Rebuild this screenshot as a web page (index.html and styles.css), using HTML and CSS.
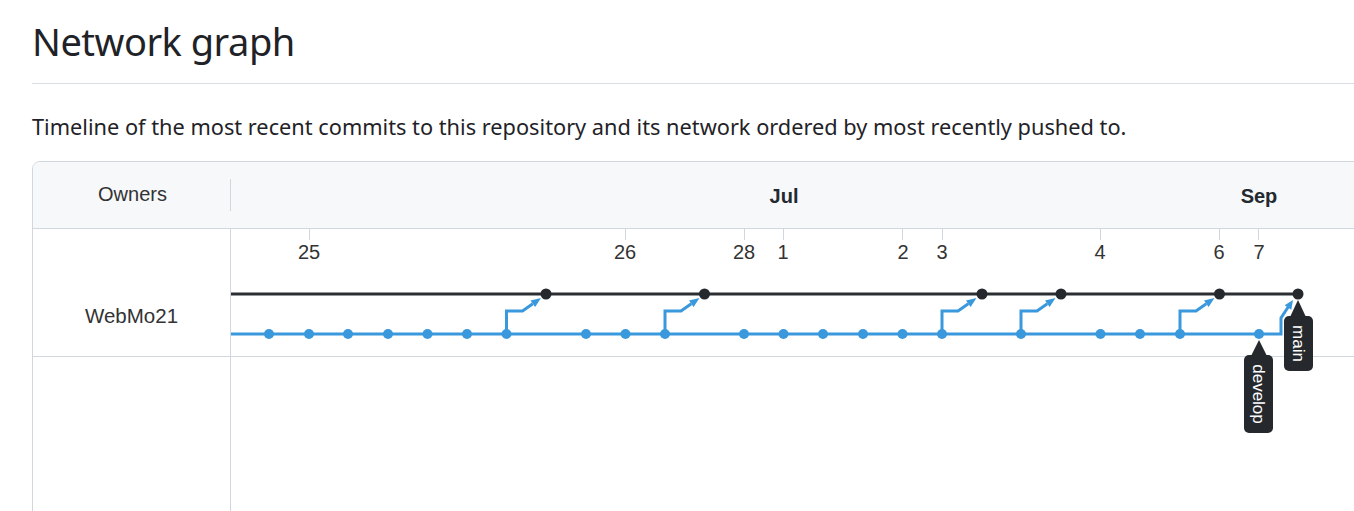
FILE: index.html
```html
<!DOCTYPE html>
<html lang="en">
<head>
<meta charset="utf-8">
<title>Network graph</title>
<link rel="stylesheet" href="styles.css">
</head>
<body>
<div class="page">
  <div class="subhead"><h2 class="subhead-title">Network graph</h2></div>
  <p class="desc">Timeline of the most recent commits to this repository and its network ordered by most recently pushed to.</p>
  <div class="network">
    <div class="net-head">
      <div class="owners-h"><span>Owners</span></div>
      <svg class="months" width="1140" height="66" viewBox="231 162 1140 66">
        <text x="784" y="203" class="month">Jul</text>
        <text x="1259" y="203" class="month">Sep</text>
      </svg>
    </div>
    <div class="net-body">
      <div class="owners-col">
        <div class="owner-spacer"></div>
        <div class="owner">WebMo21</div>
      </div>
      <svg class="graph" width="1140" height="290" viewBox="231 229 1140 290">
        <g class="ticks">
          <line x1="309.5" y1="229" x2="309.5" y2="240"/>
          <line x1="625.5" y1="229" x2="625.5" y2="240"/>
          <line x1="744.5" y1="229" x2="744.5" y2="240"/>
          <line x1="783.5" y1="229" x2="783.5" y2="240"/>
          <line x1="902.5" y1="229" x2="902.5" y2="240"/>
          <line x1="942.5" y1="229" x2="942.5" y2="240"/>
          <line x1="1100.5" y1="229" x2="1100.5" y2="240"/>
          <line x1="1219.5" y1="229" x2="1219.5" y2="240"/>
          <line x1="1258.5" y1="229" x2="1258.5" y2="240"/>
        </g>
        <g class="days">
          <text x="309" y="259">25</text>
          <text x="625" y="259">26</text>
          <text x="744" y="259">28</text>
          <text x="783" y="259">1</text>
          <text x="903" y="259">2</text>
          <text x="942" y="259">3</text>
          <text x="1100" y="259">4</text>
          <text x="1219" y="259">6</text>
          <text x="1259" y="259">7</text>
        </g>
        <line class="rowline" x1="231" y1="356.5" x2="1371" y2="356.5"/>

        <line class="main-line" x1="231" y1="294" x2="1298" y2="294"/>
        <path class="dev-line" d="M231 334 H1281 V318 L1288.5 306.5"/>
        <polygon class="dev-fill" points="1293,300 1291.3,309.7 1284.7,305.3"/>

        <g transform="translate(506.5 0)">
          <path class="dev-line" d="M0 334 V311 H16 L26.3 303.75"/>
          <polygon class="dev-fill" points="34.5,298 28.6,307.05 24,300.45"/>
        </g>
        <g transform="translate(665 0)">
          <path class="dev-line" d="M0 334 V311 H16 L26.3 303.75"/>
          <polygon class="dev-fill" points="34.5,298 28.6,307.05 24,300.45"/>
        </g>
        <g transform="translate(942 0)">
          <path class="dev-line" d="M0 334 V311 H16 L26.3 303.75"/>
          <polygon class="dev-fill" points="34.5,298 28.6,307.05 24,300.45"/>
        </g>
        <g transform="translate(1021 0)">
          <path class="dev-line" d="M0 334 V311 H16 L26.3 303.75"/>
          <polygon class="dev-fill" points="34.5,298 28.6,307.05 24,300.45"/>
        </g>
        <g transform="translate(1180 0)">
          <path class="dev-line" d="M0 334 V311 H16 L26.3 303.75"/>
          <polygon class="dev-fill" points="34.5,298 28.6,307.05 24,300.45"/>
        </g>

        <g class="dev-dots">
          <circle cx="269" cy="334" r="5"/>
          <circle cx="309" cy="334" r="5"/>
          <circle cx="348" cy="334" r="5"/>
          <circle cx="388" cy="334" r="5"/>
          <circle cx="427.5" cy="334" r="5"/>
          <circle cx="467" cy="334" r="5"/>
          <circle cx="506.5" cy="334" r="5"/>
          <circle cx="586" cy="334" r="5"/>
          <circle cx="625.5" cy="334" r="5"/>
          <circle cx="665" cy="334" r="5"/>
          <circle cx="744" cy="334" r="5"/>
          <circle cx="783.5" cy="334" r="5"/>
          <circle cx="823" cy="334" r="5"/>
          <circle cx="863" cy="334" r="5"/>
          <circle cx="902.5" cy="334" r="5"/>
          <circle cx="942" cy="334" r="5"/>
          <circle cx="1021" cy="334" r="5"/>
          <circle cx="1100.5" cy="334" r="5"/>
          <circle cx="1140" cy="334" r="5"/>
          <circle cx="1180" cy="334" r="5"/>
          <circle cx="1259" cy="334" r="5"/>
        </g>
        <g class="main-dots">
          <circle cx="546" cy="294" r="5.5"/>
          <circle cx="704.5" cy="294" r="5.5"/>
          <circle cx="982" cy="294" r="5.5"/>
          <circle cx="1061" cy="294" r="5.5"/>
          <circle cx="1219.5" cy="294" r="5.5"/>
          <circle cx="1298" cy="294" r="5.5"/>
        </g>

        <g class="label">
          <path d="M1259 340 L1267 356 H1251 Z"/>
          <rect x="1244" y="355" width="29" height="78" rx="5"/>
          <text transform="translate(1258.5 394) rotate(90)">develop</text>
        </g>
        <g class="label">
          <path d="M1298 300 L1306 317 H1290 Z"/>
          <rect x="1284" y="316" width="29" height="55" rx="5"/>
          <text transform="translate(1298.5 343.5) rotate(90)">main</text>
        </g>
      </svg>
    </div>
  </div>
</div>
</body>
</html>
```

FILE: styles.css
```css
* { box-sizing: border-box; }
html, body { margin: 0; padding: 0; background: #fff; overflow: hidden; }
body { width: 1354px; height: 511px; font-family: "Noto Sans", "Open Sans", sans-serif; color: #1f2328; }

.page { padding-left: 32px; }

.subhead {
  padding-top: 16px;
  padding-bottom: 17px;
  border-bottom: 1px solid #d8dee4;
}
.subhead-title {
  margin: 0;
  font-size: 38px;
  line-height: 50px;
  font-weight: 400;
  letter-spacing: -0.5px;
}

.desc {
  margin: 28px 0 19px;
  font-size: 21.75px;
  line-height: 30px;
  letter-spacing: 0;
}

.network {
  width: 1340px;
  height: 400px;
  border: 1px solid #d0d7de;
  border-radius: 8px;
  overflow: hidden;
  font-family: "Liberation Sans", Arial, sans-serif;
  color: #333;
}

.net-head {
  display: flex;
  align-items: center;
  height: 67px;
  background: #f6f8fa;
  border-bottom: 1px solid #d0d7de;
}
.owners-h {
  width: 198px;
  height: 32px;
  border-right: 1px solid #d0d7de;
  display: flex;
  align-items: center;
  justify-content: center;
  font-size: 20px;
  padding-bottom: 1px;
  padding-left: 2px;
}
.months { display: block; flex: none; align-self: flex-start; }
.month {
  font-family: "Liberation Sans", Arial, sans-serif;
  font-size: 20px;
  font-weight: 700;
  fill: #24292f;
  text-anchor: middle;
}

.net-body { display: flex; }
.owners-col {
  width: 198px;
  height: 332px;
  border-right: 1px solid #d0d7de;
  flex: none;
}
.owner-spacer { height: 47px; }
.owner {
  height: 81px;
  border-bottom: 1px solid #d0d7de;
  display: flex;
  align-items: center;
  justify-content: center;
  font-size: 20.5px;
}

.graph { display: block; flex: none; }
.ticks line { stroke: #d0d7de; stroke-width: 1; }
.days text {
  font-family: "Liberation Sans", Arial, sans-serif;
  font-size: 20px;
  fill: #333;
  text-anchor: middle;
}
.rowline { stroke: #d0d7de; stroke-width: 1; }

.main-line { stroke: #2a2e33; stroke-width: 3; }
.dev-line { stroke: #3a98dc; stroke-width: 3; fill: none; }
.dev-fill { fill: #3a98dc; }
.dev-dots circle { fill: #3a98dc; }
.main-dots circle { fill: #25292e; }

.label path, .label rect { fill: #25292e; }
.label text {
  font-family: "Liberation Sans", Arial, sans-serif;
  font-size: 17px;
  fill: #fff;
  text-anchor: middle;
  dominant-baseline: central;
}
```
